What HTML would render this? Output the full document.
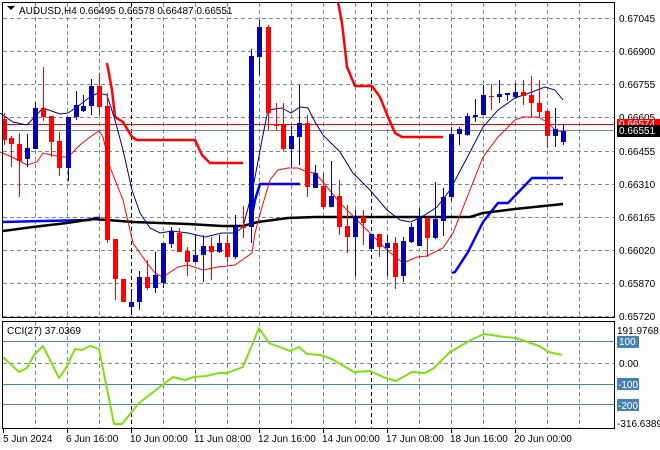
<!DOCTYPE html>
<html><head><meta charset="utf-8"><style>
html,body{margin:0;padding:0;background:#fff;width:660px;height:450px;overflow:hidden}
svg{display:block;font-family:"Liberation Sans",sans-serif;font-size:10px}
</style></head><body>
<svg width="660" height="450" viewBox="0 0 660 450" xmlns="http://www.w3.org/2000/svg">
<rect width="660" height="450" fill="#fff"/>
<!-- grid main -->
<g stroke="#778899" stroke-width="1" stroke-dasharray="4,3" fill="none" shape-rendering="crispEdges">
<path d="M3 18.5H614M3 51.5H614M3 84.5H614M3 117.5H614M3 151.5H614M3 184.5H614M3 217.5H614M3 250.5H614M3 283.5H614M3 316.5H614"/>
<path d="M35.5 3V317M67.5 3V317M99.5 3V317M163.5 3V317M195.5 3V317M227.5 3V317M259.5 3V317M291.5 3V317M323.5 3V317M355.5 3V317M387.5 3V317M419.5 3V317M451.5 3V317M483.5 3V317M515.5 3V317M547.5 3V317M579.5 3V317"/>
<path d="M35.5 322V428M67.5 322V428M99.5 322V428M163.5 322V428M195.5 322V428M227.5 322V428M259.5 322V428M291.5 322V428M323.5 322V428M355.5 322V428M387.5 322V428M419.5 322V428M451.5 322V428M483.5 322V428M515.5 322V428M547.5 322V428M579.5 322V428M3 363.5H614"/>
</g>
<g stroke="#000" stroke-dasharray="4,3" shape-rendering="crispEdges"><path d="M131.5 3V317M371.5 3V317M131.5 322V428M371.5 322V428"/></g>
<!-- price lines -->
<path d="M3 124.5H614" stroke="#ff0000" shape-rendering="crispEdges"/>
<path d="M3 130.5H614" stroke="#778899" shape-rendering="crispEdges"/>
<!-- thick lines -->
<g fill="none" stroke-width="2.5" stroke-linejoin="round">
<polyline stroke="#ff0000" points="107,63 112,90 115,117 123,122 132,137 137,140 195,140 202,155 210,163 243,163"/>
<polyline stroke="#ff0000" points="338,2 342,23 347,67 355,86 372,86 380,97 388,117 395,133 402,137 443,137"/>
<polyline stroke="#0000ff" points="3,222 43,221 90,220 95,218 100,218"/>
<polyline stroke="#0000ff" points="250,226 255,200 260,184 300,184"/>
<polyline stroke="#0000ff" points="452,273 455,272 468,252 483,222 498,203 508,203 532,178 563,178"/>
<polyline stroke="#000" points="3,231 33,227 67,223 93,219 107,220 133,222 160,223 188,224 222,226 243,226 258,222 288,218 315,217 470,217 483,213 515,209 563,204"/>
</g>
<g fill="none" stroke-width="1">
<polyline stroke="#000080" points="0,113 13,122 27,125 43,108 60,114 68,113 77,107 90,97 98,93 107,95 115,120 123,150 132,190 140,213 150,228 160,233 172,231 188,233 205,237 222,233 235,233 243,227 252,193 262,140 268,110 282,108 291,113 300,107 308,108 315,122 323,135 340,152 353,173 370,190 387,210 400,220 410,222 420,218 437,207 450,190 470,152 483,127 498,110 515,98 532,92 545,87 555,90 563,100"/>
<polyline stroke="#ff0000" points="0,152 12,157 27,165 37,162 43,153 52,155 60,157 68,157 80,145 90,137 99,131 103,137 110,167 123,200 133,243 147,263 155,273 163,277 178,267 188,265 203,270 218,267 235,265 245,258 252,253 255,233 262,207 270,180 278,170 288,168 298,168 307,172 315,173 323,182 340,203 350,213 370,233 387,250 403,263 417,257 427,256 443,248 453,233 470,190 483,157 498,137 515,120 523,117 538,117 547,122 555,130 563,132"/>
</g>
<!-- candles -->
<g shape-rendering="crispEdges">
<g stroke="#ff0000" fill="#ff0000">
<path d="M4.5 113V145M11.5 136V167M19.5 133V197M43.5 67V121M51.5 116V157M59.5 132V176M99.5 73V115M107.5 93V243M115.5 239V300M123.5 279V302M147.5 260V290M179.5 228V252M187.5 247V276M211.5 237V280M227.5 235V262M243.5 206V238M268.5 25V130M276.5 103V130M283.5 103V151M307.5 115V197M323.5 173V209M339.5 180V235M347.5 205V253M363.5 210V245M379.5 234V257M395.5 237V289M427.5 217V257M491.5 84V110M523.5 80V105M531.5 76V117M539.5 80V117M547.5 111V148"/>
</g>
<g fill="#ff0000">
<rect x="2" y="119" width="5" height="21"/><rect x="9" y="138" width="5" height="6"/><rect x="17" y="144" width="5" height="17"/><rect x="41" y="108" width="5" height="9"/><rect x="49" y="116" width="5" height="26"/><rect x="57" y="141" width="5" height="27"/><rect x="97" y="86" width="5" height="21"/><rect x="105" y="106" width="5" height="134"/><rect x="113" y="239" width="5" height="40"/><rect x="121" y="279" width="5" height="23"/><rect x="145" y="277" width="5" height="11"/><rect x="177" y="233" width="5" height="19"/><rect x="185" y="251" width="5" height="11"/><rect x="209" y="246" width="5" height="6"/><rect x="225" y="243" width="5" height="14"/><rect x="241" y="226" width="5" height="2"/><rect x="266" y="27" width="5" height="86"/><rect x="274" y="124" width="5" height="2"/><rect x="281" y="124" width="5" height="25"/><rect x="305" y="123" width="5" height="64"/><rect x="321" y="186" width="5" height="21"/><rect x="337" y="196" width="5" height="31"/><rect x="345" y="226" width="5" height="11"/><rect x="361" y="217" width="5" height="6"/><rect x="377" y="234" width="5" height="13"/><rect x="393" y="243" width="5" height="34"/><rect x="425" y="218" width="5" height="20"/><rect x="489" y="96" width="5" height="1"/><rect x="521" y="92" width="5" height="4"/><rect x="529" y="95" width="5" height="8"/><rect x="537" y="103" width="5" height="9"/><rect x="545" y="111" width="5" height="25"/>
</g>
<g stroke="#0000b4">
<path d="M27.5 134V167M35.5 102V149M68.5 117V181M76.5 91V120M83.5 95V112M91.5 79V115M131.5 289V312M139.5 271V310M155.5 252V293M163.5 243V288M171.5 227V248M195.5 235V262M203.5 235V282M219.5 235V253M235.5 215V259M251.5 49V243M259.5 20V75M291.5 126V167M299.5 85V165M315.5 165V188M331.5 161V207M355.5 210V276M371.5 234V250M387.5 235V276M403.5 237V282M411.5 223V243M419.5 208V246M435.5 182V239M443.5 188V236M451.5 127V201M459.5 127V145M467.5 113V136M475.5 99V122M483.5 85V115M499.5 80V103M507.5 93V101M515.5 83V99M555.5 108V147M563.5 124V145"/>
</g>
<g fill="#0000b4">
<rect x="25" y="148" width="5" height="11"/><rect x="33" y="108" width="5" height="41"/><rect x="66" y="117" width="5" height="51"/><rect x="74" y="105" width="5" height="12"/><rect x="81" y="106" width="5" height="5"/><rect x="89" y="86" width="5" height="20"/><rect x="129" y="302" width="5" height="5"/><rect x="137" y="277" width="5" height="25"/><rect x="153" y="275" width="5" height="13"/><rect x="161" y="243" width="5" height="40"/><rect x="169" y="231" width="5" height="13"/><rect x="193" y="255" width="5" height="7"/><rect x="201" y="246" width="5" height="9"/><rect x="217" y="243" width="5" height="9"/><rect x="233" y="226" width="5" height="31"/><rect x="249" y="56" width="5" height="171"/><rect x="257" y="27" width="5" height="30"/><rect x="289" y="136" width="5" height="13"/><rect x="297" y="123" width="5" height="14"/><rect x="313" y="173" width="5" height="15"/><rect x="329" y="196" width="5" height="11"/><rect x="353" y="217" width="5" height="20"/><rect x="369" y="234" width="5" height="15"/><rect x="385" y="243" width="5" height="5"/><rect x="401" y="241" width="5" height="35"/><rect x="409" y="227" width="5" height="15"/><rect x="417" y="218" width="5" height="28"/><rect x="433" y="219" width="5" height="19"/><rect x="441" y="197" width="5" height="24"/><rect x="449" y="134" width="5" height="63"/><rect x="457" y="129" width="5" height="5"/><rect x="465" y="116" width="5" height="19"/><rect x="473" y="115" width="5" height="2"/><rect x="481" y="95" width="5" height="20"/><rect x="497" y="94" width="5" height="3"/><rect x="505" y="93" width="5" height="2"/><rect x="513" y="92" width="5" height="5"/><rect x="553" y="129" width="5" height="7"/><rect x="561" y="131" width="5" height="11"/>
</g>
</g>
<!-- frames -->
<g fill="none" stroke="#000" shape-rendering="crispEdges">
<rect x="2.5" y="2.5" width="612" height="315"/>
<rect x="2.5" y="321.5" width="612" height="107"/>
</g>
<!-- CCI levels -->
<g stroke="#4682b4" shape-rendering="crispEdges"><path d="M3 341.5H614M3 384.5H614M3 404.5H614"/></g>
<polyline fill="none" stroke="#7fe00f" stroke-width="2" stroke-linejoin="round" points="3,357 19,372 27,368 34,355 43,346 59,378 66,368 75,349 82,350 90,346 99,349 114,424 122,424 139,403 173,377 185,380 194,377 206,376 219,373 227,373 243,367 259,328 269,343 290,351 299,347 307,354 320,355 332,359 354,372 370,371 383,377 396,381 412,372 425,373 434,368 450,352 471,340 484,334 505,337 516,338 539,346 549,352 562,355"/>
<!-- texts -->
<path d="M7 6h8l-4 4z" fill="#000"/>
<text x="19" y="14" fill="#000">AUDUSD,H4  0.66495 0.66578 0.66487 0.66551</text>
<text x="7" y="334" fill="#000">CCI(27) 37.0369</text>
<g fill="#000">
<text x="619" y="22">0.67045</text><text x="619" y="55">0.66900</text><text x="619" y="88">0.66755</text><text x="619" y="121">0.66605</text><text x="619" y="155">0.66455</text><text x="619" y="188">0.66310</text><text x="619" y="221">0.66165</text><text x="619" y="254">0.66020</text><text x="619" y="287">0.65870</text><text x="619" y="320">0.65720</text>
</g>
<rect x="617" y="119" width="43" height="8" fill="#ff0000"/>
<text x="619" y="127" fill="#fff">0.66574</text>
<rect x="617" y="125" width="43" height="12" fill="#000"/>
<text x="619" y="134" fill="#fff">0.66551</text>
<text x="617" y="334" fill="#000">191.9768</text>
<rect x="617" y="336" width="22" height="12" fill="#4682b4"/><text x="619" y="345" fill="#fff">100</text>
<text x="619" y="367" fill="#000">0.00</text>
<rect x="617" y="378" width="22" height="12" fill="#4682b4"/><text x="618" y="388" fill="#fff">-100</text>
<rect x="617" y="399" width="22" height="12" fill="#4682b4"/><text x="618" y="409" fill="#fff">-200</text>
<text x="617" y="427" fill="#000">-316.6389</text>
<g stroke="#000" shape-rendering="crispEdges"><path d="M3.5 429V433M67.5 429V433M131.5 429V433M195.5 429V433M259.5 429V433M323.5 429V433M387.5 429V433M451.5 429V433M515.5 429V433"/></g>
<g fill="#000">
<text x="3" y="442">5 Jun 2024</text><text x="66" y="442">6 Jun 16:00</text><text x="130" y="442">10 Jun 00:00</text><text x="194" y="442">11 Jun 08:00</text><text x="258" y="442">12 Jun 16:00</text><text x="322" y="442">14 Jun 00:00</text><text x="386" y="442">17 Jun 08:00</text><text x="450" y="442">18 Jun 16:00</text><text x="514" y="442">20 Jun 00:00</text>
</g>
</svg>
</body></html>
